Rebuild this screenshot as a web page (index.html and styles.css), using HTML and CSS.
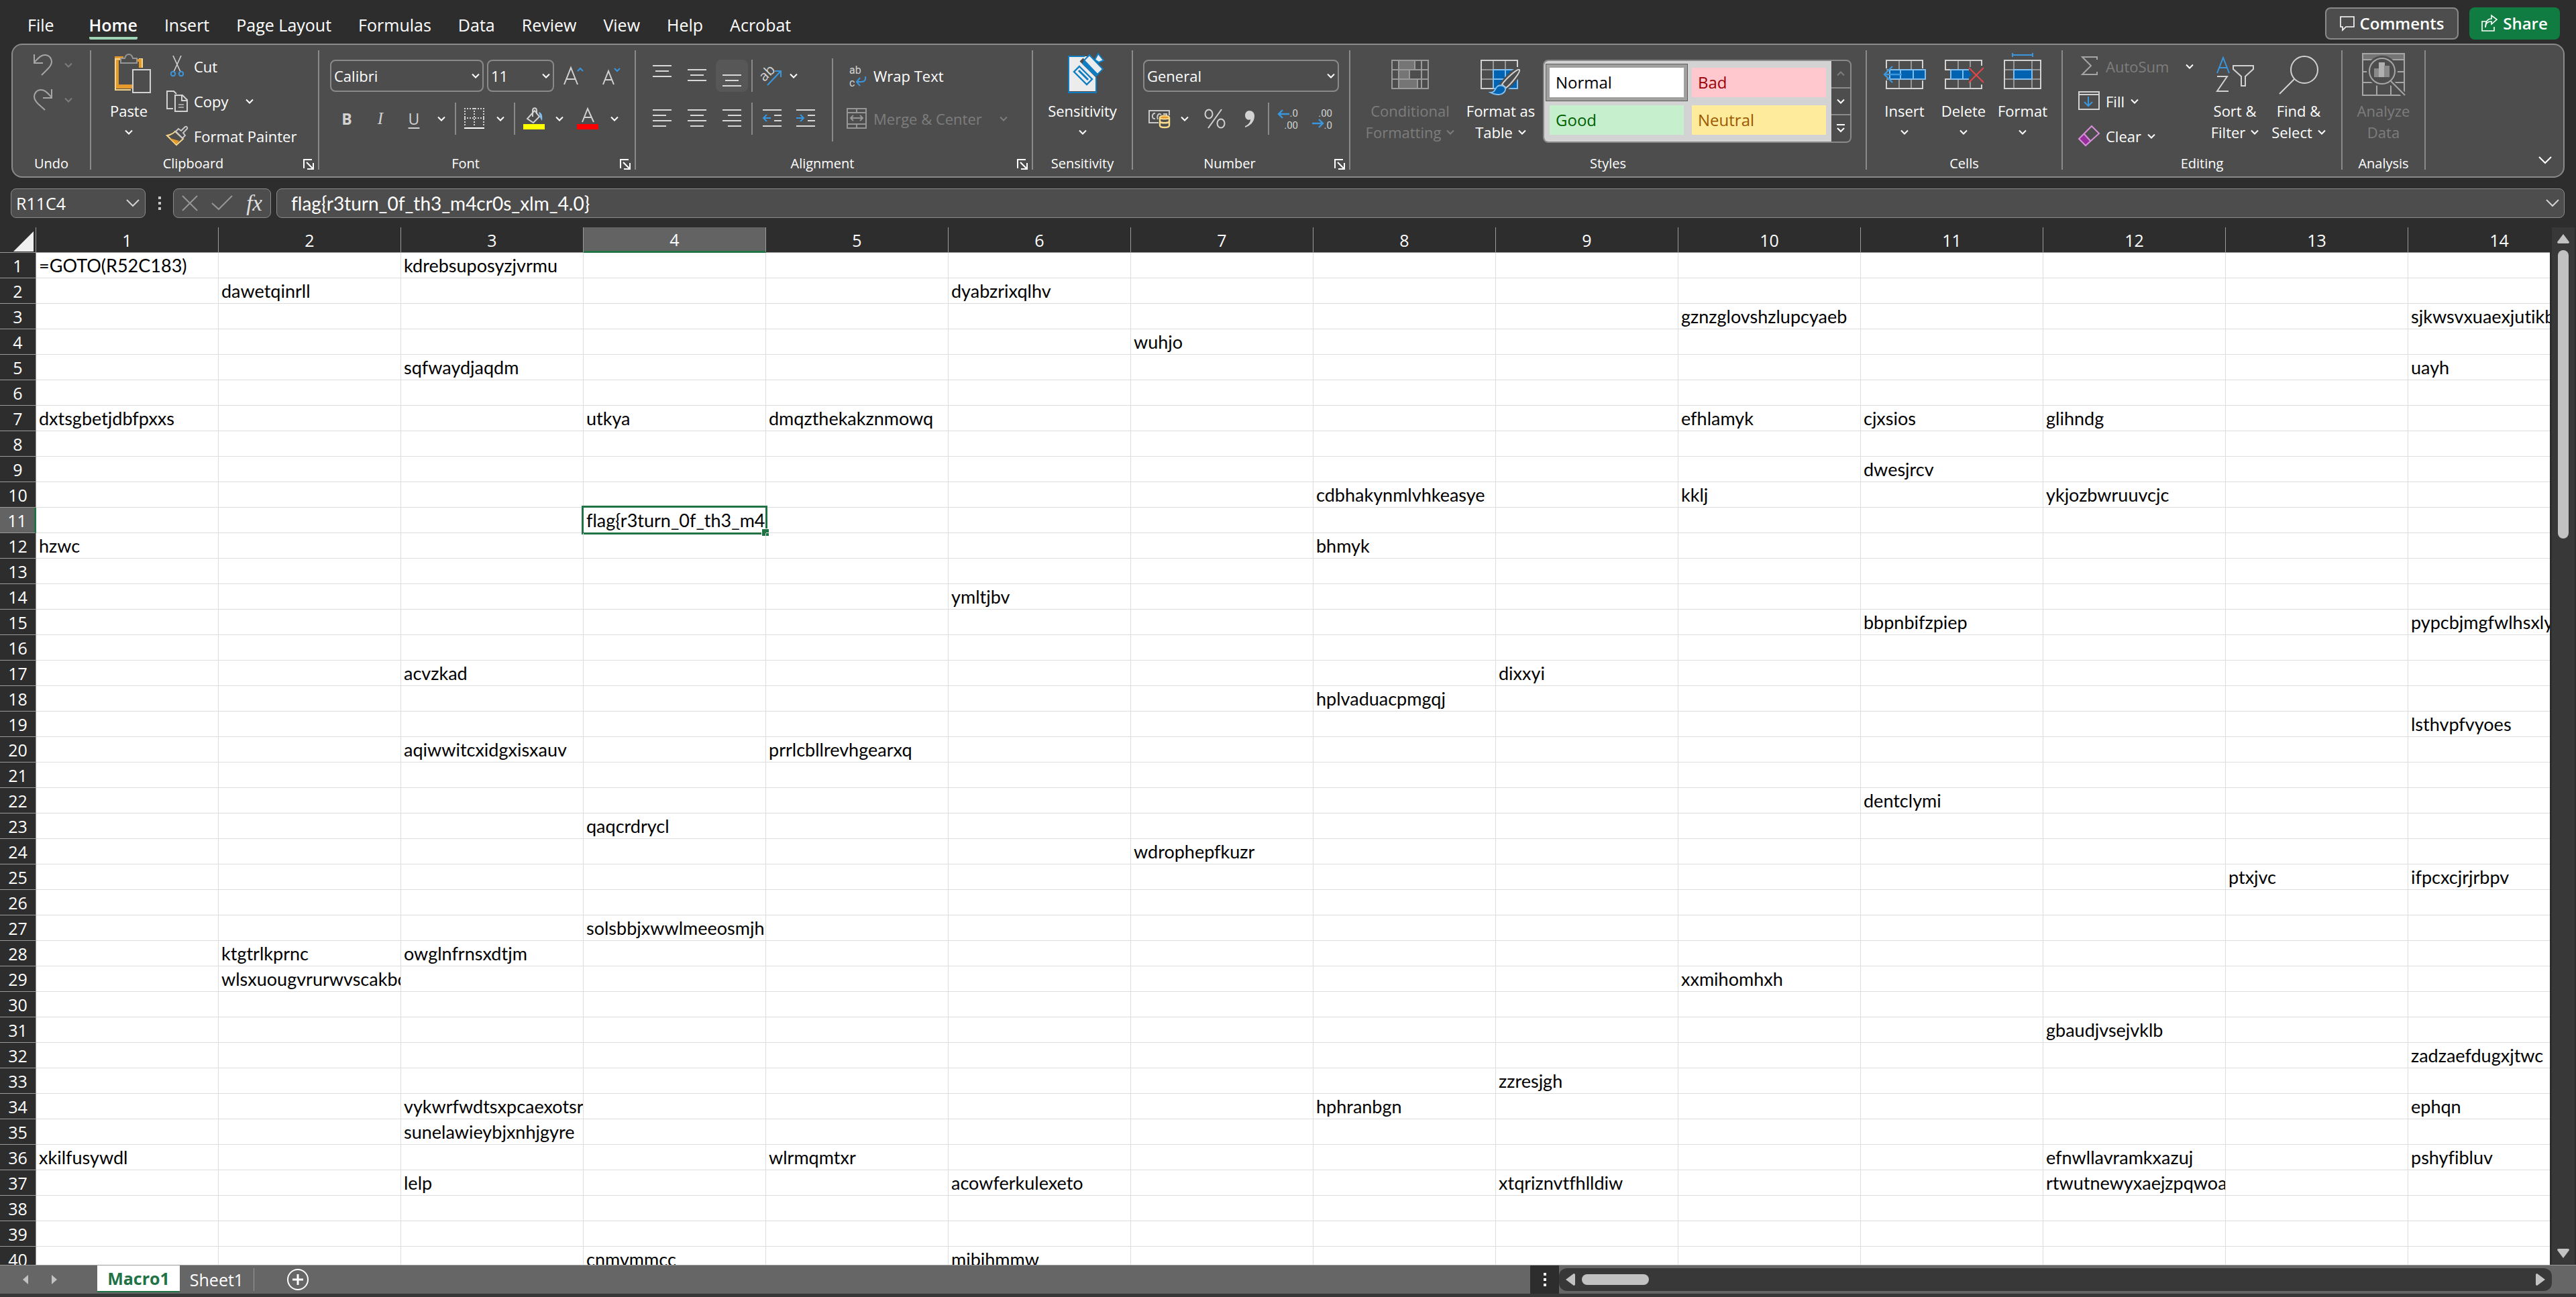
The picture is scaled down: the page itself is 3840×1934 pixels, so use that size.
FILE: index.html
```html
<!DOCTYPE html>
<html lang="en">
<head>
<meta charset="utf-8">
<title>Macro1 - Workbook</title>
<link rel="stylesheet" href="styles.css">
</head>
<body>
<svg class="defs" aria-hidden="true">
  <symbol id="chev" viewBox="0 0 12 8"><path d="M1 1.5l5 5 5-5" fill="none" stroke="currentColor" stroke-width="2"/></symbol>
  <symbol id="chev-lg" viewBox="0 0 20 12"><path d="M1 1l9 9 9-9" fill="none" stroke="currentColor" stroke-width="2"/></symbol>
  <symbol id="launch" viewBox="0 0 16 16"><path d="M1 14V1h12M5 5l9 9M15 6v9H6" fill="none" stroke="currentColor" stroke-width="2"/></symbol>
</svg>

<header class="topbar">
  <nav class="tabs">
    <a href="#">File</a><a href="#" class="current">Home</a><a href="#">Insert</a><a href="#">Page Layout</a><a href="#">Formulas</a><a href="#">Data</a><a href="#">Review</a><a href="#">View</a><a href="#">Help</a><a href="#">Acrobat</a>
  </nav>
  <div class="actions">
    <button class="comments"><svg width="22" height="24" viewBox="0 0 22 24"><path d="M1 2h20v15H9l-5 5v-5H1z" fill="none" stroke="#fff" stroke-width="1.6"/></svg>Comments</button>
    <button class="share"><svg width="24" height="24" viewBox="0 0 24 24"><path d="M8 9H1v14h18v-6M6 18c0-7 4-9 9-9V13l8-7-8-6v5C9 5 6 10 6 18z" fill="none" stroke="#fff" stroke-width="1.6"/></svg>Share</button>
  </div>
</header>

<section class="ribbon">
  <div class="group g-undo">
    <div class="body undo-list">
      <div class="pair"><button aria-label="Undo"><svg width="28" height="32" viewBox="0 0 28 32"><path d="M1 0v13h13M1 12C8 5 11 1 17 1c7 0 10 6 10 10 0 5-3 8-6 11l-9 9" fill="none" stroke="#a6a6a6" stroke-width="2"/></svg></button><svg class="c dim"><use href="#chev"/></svg></div>
      <div class="pair"><button aria-label="Redo"><svg width="28" height="32" viewBox="0 0 28 32"><path d="M27 0v13H14M27 12C20 5 17 1 11 1 4 1 1 7 1 11c0 5 3 8 6 11l10 9" fill="none" stroke="#a6a6a6" stroke-width="2"/></svg></button><svg class="c dim"><use href="#chev"/></svg></div>
    </div>
    <div class="foot">Undo</div>
  </div>

  <div class="group g-clip">
    <div class="body">
      <button class="big w112"><svg width="66" height="64" viewBox="0 0 66 64"><path d="M25 8H15v42h23" fill="none" stroke="#e69a2b" stroke-width="6"/><path d="M20 9h-7v46h23M48 9h5v13" fill="none" stroke="#f8d68b" stroke-width="2" /><path d="M46 11h4v11" fill="none" stroke="#e69a2b" stroke-width="4"/><path d="M21 15V8h6c1-4 3-6 6-6s5 2 6 6h6v7z" fill="#4d4d4d" stroke="#969696" stroke-width="2"/><rect x="39" y="25" width="26" height="34" fill="#4d4d4d" stroke="#d2d2d2" stroke-width="2"/></svg><span>Paste</span><svg class="c"><use href="#chev"/></svg></button>
      <div class="list">
        <button><svg width="32" height="32" viewBox="0 0 32 32"><path d="M10 0l11 24M22 0L11 24" fill="none" stroke="#d2d2d2" stroke-width="1.6"/><circle cx="10" cy="27" r="3.2" fill="none" stroke="#3a96dd" stroke-width="2"/><circle cx="22" cy="27" r="3.2" fill="none" stroke="#3a96dd" stroke-width="2"/></svg>Cut</button>
        <button><svg width="32" height="32" viewBox="0 0 32 32"><path d="M10 27H1V1h10l4 4M13 31V7h11l7 7v17zM23 7v8h8" fill="none" stroke="#d2d2d2" stroke-width="2"/><path d="M18 21h8M18 25h8" stroke="#a0a0a0" stroke-width="2"/></svg>Copy<svg class="c far"><use href="#chev"/></svg></button>
        <button><svg width="32" height="32" viewBox="0 0 32 32"><path d="M13 9C10 13 6 14 1 15l14 14 10-9z" fill="#4d4d4d" stroke="#f8d68b" stroke-width="2"/><path d="M5 19l14 4-4 5z" fill="#e69a2b"/><path d="M14 9l4-4 4 3 6-6c2-1 4 1 3 3l-6 6 3 4-4 4z" fill="#4d4d4d" stroke="#c8c8c8" stroke-width="2"/></svg>Format Painter</button>
      </div>
    </div>
    <div class="foot has-launch">Clipboard<svg class="launch"><use href="#launch"/></svg></div>
  </div>

  <div class="group g-font">
    <div class="body rows">
      <div class="row font-top">
        <label class="combo font-name"><select aria-label="Font"><option>Calibri</option></select><svg class="c"><use href="#chev"/></svg></label>
        <label class="combo font-size"><select aria-label="Font size"><option>11</option></select><svg class="c"><use href="#chev"/></svg></label>
        <button aria-label="Increase font size"><svg width="32" height="30" viewBox="0 0 32 30"><path d="M2 28L12 3l10 25M6 20h12" fill="none" stroke="#d2d2d2" stroke-width="2"/><path d="M22 8l4-4 4 4" fill="none" stroke="#3a96dd" stroke-width="2"/></svg></button>
        <button aria-label="Decrease font size"><svg width="32" height="30" viewBox="0 0 32 30"><path d="M3 28l8-20 8 20M6 21h10" fill="none" stroke="#d2d2d2" stroke-width="2"/><path d="M20 4l4 4 4-4" fill="none" stroke="#3a96dd" stroke-width="2"/></svg></button>
      </div>
      <div class="row font-bottom">
        <button class="glyph bold">B</button><button class="glyph italic">I</button><button class="glyph under">U</button><svg class="c"><use href="#chev"/></svg><i class="bar"></i>
        <button aria-label="Borders"><svg width="30" height="32" viewBox="0 0 30 32"><path d="M0 1h30M0 15h30M1 0v27M15 0v27M29 0v27" fill="none" stroke="#d2d2d2" stroke-width="2" stroke-dasharray="2 2"/><path d="M0 30h30" stroke="#fff" stroke-width="2"/></svg></button><svg class="c"><use href="#chev"/></svg><i class="bar"></i>
        <button aria-label="Fill color"><svg width="32" height="34" viewBox="0 0 32 34"><path d="M14 14V5c0-5 6-5 6 0v5M17 5L6 17l9 6 9-9z" fill="none" stroke="#d2d2d2" stroke-width="2"/><path d="M23 7c5 1 6 6 5 13-3-3-3-7-5-13z" fill="#83beec"/><path d="M0 25h32v8H0z" fill="#ff0"/></svg></button><svg class="c"><use href="#chev"/></svg>
        <button aria-label="Font color"><svg width="32" height="34" viewBox="0 0 32 34"><path d="M8 22L16 2l9 20M11 15h11" fill="none" stroke="#d2d2d2" stroke-width="2"/><path d="M0 25h32v8H0z" fill="#f00"/></svg></button><svg class="c"><use href="#chev"/></svg>
      </div>
    </div>
    <div class="foot has-launch">Font<svg class="launch"><use href="#launch"/></svg></div>
  </div>

  <div class="group g-align">
    <div class="body">
      <div class="rows">
        <div class="row al-top">
          <button aria-label="Top align"><svg width="28" height="32" viewBox="0 0 28 32"><path d="M0 1h28M4 9h20M0 17h28" stroke="#d8d8d8" stroke-width="2"/></svg></button>
          <button aria-label="Middle align"><svg width="28" height="32" viewBox="0 0 28 32"><path d="M0 7h28M4 15h20M0 23h28" stroke="#d8d8d8" stroke-width="2"/></svg></button>
          <button aria-label="Bottom align" class="on"><svg width="28" height="32" viewBox="0 0 28 32"><path d="M0 15h28M4 23h20M0 31h28" stroke="#d8d8d8" stroke-width="2"/></svg></button><i class="bar"></i>
          <button aria-label="Orientation"><svg width="34" height="34" viewBox="0 0 34 34"><text x="6" y="27" class="icon-ab" transform="rotate(-45 6 25)">ab</text><path d="M12 31L31 11M23 10h9v9" fill="none" stroke="#3a96dd" stroke-width="2"/></svg></button><svg class="c"><use href="#chev"/></svg>
        </div>
        <div class="row al-bottom">
          <button aria-label="Align left"><svg width="28" height="28" viewBox="0 0 28 28"><path d="M0 1h28M0 9h20M0 17h28M0 25h20" stroke="#d8d8d8" stroke-width="2"/></svg></button>
          <button aria-label="Center"><svg width="28" height="28" viewBox="0 0 28 28"><path d="M0 1h28M4 9h20M0 17h28M4 25h20" stroke="#d8d8d8" stroke-width="2"/></svg></button>
          <button aria-label="Align right"><svg width="28" height="28" viewBox="0 0 28 28"><path d="M0 1h28M8 9h20M0 17h28M8 25h20" stroke="#d8d8d8" stroke-width="2"/></svg></button><i class="bar"></i>
          <button aria-label="Decrease indent"><svg width="28" height="28" viewBox="0 0 28 28"><path d="M0 1h28M17 9h11M17 17h11M0 25h28" stroke="#d8d8d8" stroke-width="2"/><path d="M12 13H1M6 8l-5 5 5 5" fill="none" stroke="#3a96dd" stroke-width="2"/></svg></button>
          <button aria-label="Increase indent"><svg width="28" height="28" viewBox="0 0 28 28"><path d="M0 1h28M17 9h11M17 17h11M0 25h28" stroke="#d8d8d8" stroke-width="2"/><path d="M0 13h11M6 8l5 5-5 5" fill="none" stroke="#3a96dd" stroke-width="2"/></svg></button>
        </div>
      </div>
      <i class="bar tall"></i>
      <div class="rows wrap-col">
        <button class="line"><svg width="30" height="32" viewBox="0 0 30 32"><text x="4" y="13" class="icon-wr">ab</text><text x="4" y="32" class="icon-wr">c</text><path d="M28 17c1 5-1 8-6 8h-7M20 19l-5 6 5 6" fill="none" stroke="#3a96dd" stroke-width="2"/></svg>Wrap Text</button>
        <button class="line dim" disabled><svg width="30" height="32" viewBox="0 0 30 32"><path d="M1 1h28v29H1zM1 7h28M1 24h28M15 1v6M15 24v6M6 15h18M10 11l-4 4 4 4M20 11l4 4-4 4" fill="none" stroke="#969696" stroke-width="2"/></svg>Merge &amp; Center<svg class="c far"><use href="#chev"/></svg></button>
      </div>
    </div>
    <div class="foot has-launch">Alignment<svg class="launch"><use href="#launch"/></svg></div>
  </div>

  <div class="group g-sens">
    <div class="body">
      <button class="big fill"><svg width="64" height="64" viewBox="0 0 64 64"><path d="M11 5h31v10l9 20v22H11z" fill="#ececec"/><path d="M35 5H11v54h41V36" fill="none" stroke="#0f7dc2" stroke-width="2"/><path d="M30 10l24 24" stroke="#4d4d4d" stroke-width="7"/><path d="M27 20l19 19-8 8-19-19z" fill="#ececec" stroke="#0f7dc2" stroke-width="2.4"/><path d="M26 26l14 14" stroke="#0f7dc2" stroke-width="3"/><path d="M42 3l20 21-8 8L34 11z" fill="#ececec" stroke="#0f7dc2" stroke-width="2"/><path d="M34 11l21 21-3 4-21-20z" fill="#0f7dc2"/><path d="M50 10l5-9 8 10-7 3z" fill="#ececec" stroke="#0f7dc2" stroke-width="2"/></svg><span>Sensitivity</span><svg class="c"><use href="#chev"/></svg></button>
    </div>
    <div class="foot">Sensitivity</div>
  </div>

  <div class="group g-num">
    <div class="body rows">
      <div class="row num-top"><label class="combo num-format"><select aria-label="Number format"><option>General</option></select><svg class="c"><use href="#chev"/></svg></label></div>
      <div class="row num-bottom">
        <button aria-label="Accounting format"><svg width="32" height="28" viewBox="0 0 32 28"><path d="M15 20H1V2h30v7" fill="none" stroke="#c8c8c8" stroke-width="2"/><path d="M10 6c-5-1-6 9 0 8M19 8c-4-4-7 2-5 7M22 7h5v3" fill="none" stroke="#c8c8c8" stroke-width="2"/><path d="M17 12v12c0 4 14 4 14 0V12" fill="#4d4d4d" stroke="#fbdc8e" stroke-width="2.4"/><path d="M17 18c1 3 13 3 14 0" fill="none" stroke="#fbdc8e" stroke-width="2.4"/><ellipse cx="24" cy="12" rx="7" ry="2.6" fill="#e69a2b" stroke="#fbdc8e" stroke-width="2"/></svg></button><svg class="c"><use href="#chev"/></svg>
        <button aria-label="Percent"><svg width="32" height="30" viewBox="0 0 32 30"><ellipse cx="7" cy="8" rx="5.5" ry="6.5" fill="none" stroke="#d2d2d2" stroke-width="2"/><ellipse cx="25" cy="22" rx="5.5" ry="6.5" fill="none" stroke="#d2d2d2" stroke-width="2"/><path d="M26 1L6 29" stroke="#d2d2d2" stroke-width="2"/></svg></button>
        <button aria-label="Comma style"><svg width="16" height="28" viewBox="0 0 16 28"><path d="M7 2c5 0 8 3 8 8 0 9-7 15-14 17v-2c5-2 8-6 8-10-4 2-8-1-8-6 0-4 3-7 6-7z" fill="#d2d2d2"/></svg></button><i class="bar"></i>
        <button aria-label="Increase decimal"><svg width="32" height="34" viewBox="0 0 32 34"><text x="31" y="14" class="icon-num">.0</text><text x="31" y="32" class="icon-num">.00</text><path d="M18 10H2M8 4l-6 6 6 6" fill="none" stroke="#3a96dd" stroke-width="2.4"/></svg></button>
        <button aria-label="Decrease decimal"><svg width="32" height="34" viewBox="0 0 32 34"><text x="31" y="14" class="icon-num">.00</text><text x="31" y="32" class="icon-num">.0</text><path d="M1 24h16M11 18l6 6-6 6" fill="none" stroke="#3a96dd" stroke-width="2.4"/></svg></button>
      </div>
    </div>
    <div class="foot has-launch">Number<svg class="launch"><use href="#launch"/></svg></div>
  </div>

  <div class="group g-styles">
    <div class="body">
      <button class="big w150 dim" disabled><svg width="56" height="64" viewBox="0 0 56 64"><path d="M11 11h24v14H11zM11 25h16v14H11zM11 39h28v14H11z" fill="#757575"/><path d="M1 11h54v42H1zM1 25h54M1 39h54M11 11v42M45 11v42M35 11v14M27 25v14M39 39v14" fill="none" stroke="#9a9a9a" stroke-width="2"/></svg><span>Conditional</span><span>Formatting <svg class="c"><use href="#chev"/></svg></span></button>
      <button class="big w120"><svg width="60" height="64" viewBox="0 0 60 64"><path d="M19 25h36v28H19z" fill="#0063b1"/><path d="M19 11v42M37 11v14M1 25h18M1 39h18" fill="none" stroke="#969696" stroke-width="2"/><path d="M19 53V25h36v28zM37 25v28M19 39h36" fill="none" stroke="#83beec" stroke-width="2"/><path d="M19 53H1V11h54v10" fill="none" stroke="#d2d2d2" stroke-width="2"/><path d="M32 47C38 38 54 22 58 25S46 46 38 52z" fill="#4d4d4d" stroke="#4d4d4d" stroke-width="7"/><path d="M32 47C38 38 56 22 58 25S46 46 38 52z" fill="#4d4d4d" stroke="#d2d2d2" stroke-width="2"/><path d="M15 59c6 0 6-4 9-8 4-5 14-2 13 4-2 8-14 9-22 4z" fill="#0063b1" stroke="#83beec" stroke-width="2"/></svg><span>Format as</span><span>Table <svg class="c"><use href="#chev"/></svg></span></button>
      <div class="gallery">
        <div class="swatches"><button class="s-normal">Normal</button><button class="s-bad">Bad</button><button class="s-good">Good</button><button class="s-neutral">Neutral</button></div>
        <div class="steps"><button class="dim" aria-label="Previous styles"><svg class="c flip"><use href="#chev"/></svg></button><button aria-label="Next styles"><svg class="c"><use href="#chev"/></svg></button><button aria-label="More styles"><svg width="14" height="14" viewBox="0 0 14 14"><path d="M1 1h12M2 6l5 5 5-5" fill="none" stroke="#fff" stroke-width="2"/></svg></button></div>
      </div>
    </div>
    <div class="foot">Styles</div>
  </div>

  <div class="group g-cells">
    <div class="body">
      <button class="big w88"><svg width="64" height="64" viewBox="0 0 64 64"><path d="M24 11v42M42 11v42M5 25h54M5 39h54" stroke="#969696" stroke-width="2"/><path d="M5 23V11h54v12M5 41v12h54V41" fill="none" stroke="#d2d2d2" stroke-width="2"/><path d="M10 25h53v14H10z" fill="#0063b1" stroke="#83beec" stroke-width="2"/><path d="M26 25v14M45 25v14" stroke="#83beec" stroke-width="2"/><path d="M28 32H2M14 20L2 32l12 12" fill="none" stroke="#3a96dd" stroke-width="2.4"/></svg><span>Insert</span><svg class="c"><use href="#chev"/></svg></button>
      <button class="big w88"><svg width="64" height="64" viewBox="0 0 64 64"><path d="M24 11v14M42 11v10M24 39v14M42 41v12" stroke="#969696" stroke-width="2"/><path d="M12 25H5V11h54v8M12 39H5v14h54v-6" fill="none" stroke="#d2d2d2" stroke-width="2"/><path d="M13 25h25l6 7-6 7H13z" fill="#0063b1"/><path d="M40 25H13v14h27M31 25v14" fill="none" stroke="#83beec" stroke-width="2"/><path d="M40 22l22 22M62 22L40 44" stroke="#e0484d" stroke-width="2"/></svg><span>Delete</span><svg class="c"><use href="#chev"/></svg></button>
      <button class="big w88"><svg width="56" height="64" viewBox="0 0 56 64"><path d="M15 11v42M42 11v42M1 25h54M1 39h54" stroke="#969696" stroke-width="2"/><path d="M1 11h54v42H1z" fill="none" stroke="#d2d2d2" stroke-width="2"/><path d="M15 25h27v14H15z" fill="#0063b1" stroke="#83beec" stroke-width="2"/><path d="M13 3h30M13 0v6M43 0v6" stroke="#3a96dd" stroke-width="2"/></svg><span>Format</span><svg class="c"><use href="#chev"/></svg></button>
    </div>
    <div class="foot">Cells</div>
  </div>

  <div class="group g-edit">
    <div class="body">
      <div class="list edit-list">
        <button class="dim" disabled><svg width="32" height="32" viewBox="0 0 32 32"><path d="M28 6V2H6l13 13L6 28h22v-4" fill="none" stroke="#a6a6a6" stroke-width="2"/></svg>AutoSum<svg class="c far lit"><use href="#chev"/></svg></button>
        <button><svg width="32" height="32" viewBox="0 0 32 32"><path d="M1 2h30v26H1zM1 6h30" fill="none" stroke="#d2d2d2" stroke-width="2"/><path d="M15 9v14M9 17l6 6 6-6" fill="none" stroke="#3a96dd" stroke-width="2"/></svg>Fill <svg class="c"><use href="#chev"/></svg></button>
        <button><svg width="32" height="32" viewBox="0 0 32 32"><path d="M9 13l9 10-7 7-10-10z" fill="#962e9b"/><path d="M20 1l11 11-20 18L1 20zM9 13l9 10" fill="none" stroke="#d78fd9" stroke-width="2"/></svg>Clear <svg class="c"><use href="#chev"/></svg></button>
      </div>
      <button class="big w94"><svg width="56" height="64" viewBox="0 0 56 64"><path d="M1 30L10 7l9 23M4 22h12" fill="none" stroke="#3a96dd" stroke-width="2"/><path d="M1 35h15L1 57h17" fill="none" stroke="#d2d2d2" stroke-width="2"/><path d="M25 19h30v5L43 35v14h-6V35L25 24z" fill="none" stroke="#d2d2d2" stroke-width="2"/></svg><span>Sort &amp;</span><span>Filter <svg class="c"><use href="#chev"/></svg></span></button>
      <button class="big w94"><svg width="58" height="64" viewBox="0 0 58 64"><circle cx="37" cy="25" r="20" fill="none" stroke="#d2d2d2" stroke-width="2"/><path d="M22 39L0 61" stroke="#d2d2d2" stroke-width="2"/></svg><span>Find &amp;</span><span>Select <svg class="c"><use href="#chev"/></svg></span></button>
    </div>
    <div class="foot">Editing</div>
  </div>

  <div class="group g-ana">
    <div class="body">
      <button class="big fill dim" disabled><svg width="64" height="64" viewBox="0 0 64 64"><path d="M1 1h62v9H1z" fill="#757575"/><path d="M1 1h62v62H1zM1 10h62M1 28h8M52 28h11M1 44h62M22 48v15M43 48v15" fill="none" stroke="#a6a6a6" stroke-width="2"/><circle cx="30" cy="27" r="23" fill="#4d4d4d"/><path d="M44 44l20 20" stroke="#4d4d4d" stroke-width="8"/><circle cx="30" cy="27" r="19" fill="none" stroke="#a6a6a6" stroke-width="2"/><path d="M18 23h9v13h-9z" fill="#8a8a8a"/><path d="M25 14h9v22h-9z" fill="#b0b0b0"/><path d="M33 19h8v17h-8z" fill="#8a8a8a"/><path d="M43 42l21 21" stroke="#a6a6a6" stroke-width="2"/></svg><span>Analyze</span><span>Data</span></button>
    </div>
    <div class="foot">Analysis</div>
  </div>
  <button class="collapse" aria-label="Collapse ribbon"><svg width="20" height="12"><use href="#chev-lg"/></svg></button>
</section>

<section class="formula">
  <div class="namebox"><input aria-label="Name box" value="R11C4"><svg width="20" height="12"><use href="#chev-lg"/></svg></div>
  <div class="dots"><i></i><i></i><i></i></div>
  <div class="fxbox">
    <svg width="24" height="24" viewBox="0 0 24 24"><path d="M1 1l22 22M23 1L1 23" stroke="#969696" stroke-width="2"/></svg>
    <svg width="32" height="24" viewBox="0 0 32 24"><path d="M1 12l10 9L31 1" fill="none" stroke="#969696" stroke-width="2"/></svg>
    <span>fx</span>
  </div>
  <div class="entry"><input aria-label="Formula" value="flag{r3turn_0f_th3_m4cr0s_xlm_4.0}"><svg width="20" height="12"><use href="#chev-lg"/></svg></div>
</section>

<main class="sheet">
  <div class="viewport"><table id="grid"></table></div>
  <div class="vscroll"><svg width="18" height="14" viewBox="0 0 18 14"><path d="M9 0l9 12q0 2-2 2H2q-2 0-2-2z" fill="#c2c2c2"/></svg><i></i><svg width="18" height="14" viewBox="0 0 18 14"><path d="M9 14l9-12q0-2-2-2H2Q0 0 0 2z" fill="#c2c2c2"/></svg></div>
</main>

<footer class="sheetbar">
  <div class="nav"><svg width="8" height="14" viewBox="0 0 8 14"><path d="M8 0v14L0 7z" fill="#c2c2c2"/></svg><svg width="8" height="14" viewBox="0 0 8 14"><path d="M0 0v14l8-7z" fill="#c2c2c2"/></svg></div>
  <button class="sheet-tab active">Macro1</button>
  <button class="sheet-tab">Sheet1</button>
  <button class="add" aria-label="New sheet"><svg width="32" height="32" viewBox="0 0 32 32"><circle cx="16" cy="16" r="15" fill="none" stroke="#fff" stroke-width="2"/><path d="M16 8v16M8 16h16" stroke="#fff" stroke-width="3"/></svg></button>
  <div class="hzone">
    <div class="grip"><i></i><i></i><i></i></div>
    <div class="hscroll"><svg width="14" height="18" viewBox="0 0 14 18"><path d="M0 9L12 0q2 0 2 2v14q0 2-2 2z" fill="#c2c2c2"/></svg><i></i><svg width="14" height="18" viewBox="0 0 14 18"><path d="M14 9L2 0Q0 0 0 2v14q0 2 2 2z" fill="#c2c2c2"/></svg></div>
  </div>
</footer>
<script src="grid.js"></script>
</body>
</html>
```
FILE: styles.css
```css
* { box-sizing: border-box; }
body {
  margin: 0; height: 100vh; display: flex; flex-direction: column; overflow: hidden;
  background: #2d2d2d; color: #fff; font: 22px/32px "Open Sans", "Noto Sans", sans-serif;
}
button, input, select { font: inherit; color: inherit; background: none; border: 0; padding: 0; margin: 0; }
button { display: flex; align-items: center; justify-content: center; white-space: nowrap; }
svg { display: block; flex: none; overflow: visible; }
.defs { position: absolute; width: 0; height: 0; }
.c { width: 12px; height: 8px; }
.dim { color: #7d7d7d; }
.lit { color: #fff; }
.flip { transform: rotate(180deg); }

.topbar { flex: none; height: 65px; display: flex; justify-content: space-between; padding: 0 24px 0 41px; }
.tabs { display: flex; gap: 40px; font-size: 25px; line-height: 36px; padding-top: 19px; }
.tabs a { color: #fff; text-decoration: none; height: 40px; }
.tabs .current { font-weight: 600; border-bottom: 4px solid #9fd5b7; border-radius: 2px; margin-left: 12px; }
.actions { display: flex; gap: 16px; padding-top: 11px; }
.actions button { height: 48px; border-radius: 8px; font-weight: 600; font-size: 24px; gap: 8px; }
.comments { width: 199px; background: #4d4d4d; border: 2px solid #8a8a8a; }
.share { width: 135px; background: #107c41; }

.ribbon {
  flex: none; height: 200px; margin: 0 17px; padding: 8px 0 10px; display: flex; position: relative;
  background: #4d4d4d; border: 2px solid #8a8a8a; border-radius: 16px;
}
.group { flex: none; display: flex; flex-direction: column; border-right: 2px solid #8a8a8a; }
.body { flex: 1; display: flex; align-items: flex-start; }
.foot { position: relative; height: 18px; font-size: 20px; line-height: 18px; text-align: center; }
.has-launch { padding-right: 34px; }
.launch { position: absolute; right: 6px; top: 2px; width: 16px; height: 16px; }
.g-undo { width: 117px; }
.g-clip { width: 340px; }
.g-font { width: 472px; }
.g-align { width: 592px; }
.g-sens { width: 149px; }
.g-num { width: 324px; }
.g-styles { width: 770px; }
.g-cells { width: 292px; }
.g-edit { width: 417px; }
.g-ana { width: 124px; }
.undo-list { flex-direction: column; gap: 20px; padding: 6px 0 0 31px; }
.pair { display: flex; align-items: center; gap: 18px; }
.big { flex-direction: column; justify-content: flex-start; padding-top: 4px; }
.big > svg:first-child { margin-bottom: 6px; }
.big > span { display: flex; align-items: center; gap: 8px; }
.big > .c { margin-top: 12px; }
.fill { width: 100%; }
.w112 { width: 112px; }
.w150 { width: 150px; }
.w120 { width: 120px; }
.w88 { width: 88px; }
.w94 { width: 95px; }
.list { display: flex; flex-direction: column; gap: 4px; }
.list button { height: 48px; gap: 9px; justify-content: flex-start; }
.far { margin-left: 16px; }
.rows { display: flex; flex-direction: column; gap: 16px; padding-top: 14px; }
.row { display: grid; height: 48px; align-items: center; justify-items: center; }
.bar { width: 2px; height: 48px; background: #8a8a8a; }
.combo { display: flex; align-items: center; justify-content: space-between; height: 48px; padding: 0 4px; border: 2px solid #8a8a8a; border-radius: 8px; }
.combo select { appearance: none; flex: 1; min-width: 0; height: 44px; }
.g-font .body { padding-left: 16px; }
.font-top { grid-template-columns: 229px 100px 48px 56px; column-gap: 5px; }
.font-name, .font-size, .num-format { width: 100%; }
.font-bottom { grid-template-columns: 50px 50px 50px 32px 10px 46px 32px 10px 48px 28px 56px 24px; }
.glyph { color: #d2d2d2; font-size: 23px; }
.bold { font-weight: 700; }
.italic { font-family: "Liberation Serif", serif; font-style: italic; font-size: 25px; }
.under { text-decoration: underline; text-underline-offset: 4px; }
.g-align .body { padding-left: 13px; }
.al-top { grid-template-columns: 52px 52px 52px 8px 48px 20px; }
.al-bottom { grid-template-columns: 52px 52px 52px 8px 52px 48px; }
.on { width: 48px; height: 48px; background: #575757; border-radius: 8px; }
.tall { height: 124px; margin: 12px 20px 0 auto; }
.wrap-col { width: 276px; }
.line { height: 48px; gap: 10px; justify-content: flex-start; }
.icon-ab { fill: #d2d2d2; font: 21px "Open Sans", sans-serif; }
.icon-wr { fill: #d2d2d2; font: 16px Roboto, sans-serif; }
.icon-num { fill: #d2d2d2; font: 15px Roboto, sans-serif; text-anchor: end; }
.g-num .body { padding: 14px 15px 0; }
.num-top { width: 292px; grid-template-columns: 292px; }
.num-bottom { grid-template-columns: 48px 28px 62px 42px 14px 44px 58px; }
.g-styles .body { padding-left: 14px; }
.gallery { display: flex; width: 460px; height: 124px; margin: 14px 0 0 3px; border: 2px solid #8a8a8a; border-radius: 8px; overflow: hidden; }
.swatches { flex: 1; display: grid; grid-template-columns: 200px 200px; grid-auto-rows: 44px; gap: 12px; padding: 10px 8px; background: #d3d3d3; }
.swatches button { justify-content: flex-start; padding-left: 9px; font-size: 24px; }
.s-normal { background: #fff; color: #000; box-shadow: 0 0 0 5px #a0a09f, 0 0 0 6px #5c5c5c; }
.s-bad { background: #ffc7ce; color: #9c0006; }
.s-good { background: #c6efce; color: #006100; }
.s-neutral { background: #ffeb9c; color: #9c5700; }
.steps { width: 28px; display: grid; grid-template-rows: 1fr 1fr 1fr; gap: 2px; background: #8a8a8a; }
.steps button { background: #4d4d4d; }
.g-cells .body { padding-left: 12px; }
.edit-list { width: 186px; }
.g-edit .body { padding-left: 23px; }
.collapse { margin: auto 17px 8px auto; }

.formula { flex: none; height: 44px; margin: 16px 17px 14px 16px; display: flex; }
.formula > div:not(.dots) { display: flex; align-items: center; background: #4d4d4d; border: 1px solid #8a8a8a; border-radius: 8px; }
.formula svg { color: #d2d2d2; }
.formula .namebox { width: 201px; padding: 0 8px 0 7px; }
.namebox input { flex: 1; min-width: 0; font-size: 25px; }
.dots { width: 41px; display: flex; flex-direction: column; align-items: center; justify-content: center; gap: 4px; }
.dots i, .grip i { width: 4px; height: 4px; background: #c8c8c8; }
.formula .fxbox { width: 146px; margin-right: 8px; padding: 0 12px; justify-content: space-between; }
.fxbox span { font: italic 33px/36px "Liberation Serif", serif; color: #e0e0e0; }
.formula .entry { flex: 1; padding: 0 7px 0 21px; }
.entry input { flex: 1; min-width: 0; font-family: Lato, sans-serif; font-size: 28px; font-variant-ligatures: none; }

.sheet { flex: 1; min-height: 0; display: flex; }
.viewport { flex: 1; min-width: 0; overflow: hidden; background: #fff; }
#grid { table-layout: fixed; width: 3862px; border-collapse: separate; border-spacing: 0; color: #000; font: 27px/36px Lato, sans-serif; font-variant-ligatures: none; }
#grid col:first-child { width: 54px; }
#grid th { height: 38px; padding: 0; background: #2d2d2d; color: #fff; font: 25px/36px "Open Sans", sans-serif; border: 0 solid #9a9a9a; border-width: 0 1px 1px 0; }
#grid tbody th { line-height: 35px; padding-top: 2px; }
#grid .corner { background: linear-gradient(#2d2d2d, #2d2d2d); }
.corner svg { margin: 4px 3px 0 auto; }
#grid th.sel { background: #636363; }
#grid thead th.sel { border-bottom: 3px solid #217346; line-height: 34px; }
#grid tbody th.sel { border-right: 3px solid #217346; }
#grid td { position: relative; height: 38px; padding: 0 0 0 4px; border: 0 solid #dedede; border-width: 0 1px 1px 0; }
#grid td span { display: block; height: 37px; line-height: 38px; overflow: hidden; white-space: nowrap; }
#grid td.active::before { content: ""; position: absolute; inset: -3px -3px -3px -3px; border: 3px solid #217346; }
#grid td.active::after { content: ""; position: absolute; right: -5px; bottom: -5px; width: 10px; height: 10px; background: #217346; border: solid #fff; border-width: 1px 0 0 1px; }
.vscroll { width: 39px; padding: 0 2px 0 3px; display: flex; flex-direction: column; align-items: center; background: linear-gradient(#383838, #383838) content-box; }
.vscroll svg { margin: 10px 0; }
.vscroll i { width: 16px; height: 430px; border-radius: 8px; background: #c2c2c2; margin-bottom: auto; }

.sheetbar { flex: none; height: 48px; display: flex; background: #666; border-top: 1px solid #9a9a9a; border-bottom: 5px solid #383838; font-size: 25px; }
.nav { width: 145px; display: flex; align-items: center; gap: 35px; padding-left: 34px; }
.sheet-tab { height: 34px; margin-top: 4px; width: 111px; border-right: 1px solid #9a9a9a; }
.sheet-tab.active { width: 123px; height: 40px; margin: 0; background: #fff; color: #217346; font-weight: 700; border: 0; border-bottom: 2px solid #217346; }
.add { width: 130px; }
.hzone { width: 1523px; margin: 0 36px 0 auto; display: flex; }
.grip { width: 43px; background: #2d2d2d; display: flex; flex-direction: column; align-items: center; justify-content: center; gap: 4px; }
.grip i { background: #fff; }
.hscroll { flex: 1; height: 34px; margin-top: 4px; padding: 0 10px; display: flex; align-items: center; background: #383838; border-radius: 12px; }
.hscroll i { width: 100px; height: 16px; border-radius: 8px; background: #c2c2c2; margin: 0 auto 0 10px; }
```
FILE: grid.js
```js
const COLS = 14, ROWS = 40, ACTIVE = { row: 11, col: 4 };
const cells = {
  1: { 1: "=GOTO(R52C183)", 3: "kdrebsuposyzjvrmu" },
  2: { 2: "dawetqinrll", 6: "dyabzrixqlhv" },
  3: { 10: "gznzglovshzlupcyaeb", 14: "sjkwsvxuaexjutikb" },
  4: { 7: "wuhjo" },
  5: { 3: "sqfwaydjaqdm", 14: "uayh" },
  7: { 1: "dxtsgbetjdbfpxxs", 4: "utkya", 5: "dmqzthekakznmowq", 10: "efhlamyk", 11: "cjxsios", 12: "glihndg" },
  9: { 11: "dwesjrcv" },
  10: { 8: "cdbhakynmlvhkeasye", 10: "kklj", 12: "ykjozbwruuvcjc" },
  11: { 4: "flag{r3turn_0f_th3_m4cr0s_xlm_4.0}" },
  12: { 1: "hzwc", 8: "bhmyk" },
  14: { 6: "ymltjbv" },
  15: { 11: "bbpnbifzpiep", 14: "pypcbjmgfwlhsxly" },
  17: { 3: "acvzkad", 9: "dixxyi" },
  18: { 8: "hplvaduacpmgqj" },
  19: { 14: "lsthvpfvyoes" },
  20: { 3: "aqiwwitcxidgxisxauv", 5: "prrlcbllrevhgearxq" },
  22: { 11: "dentclymi" },
  23: { 4: "qaqcrdrycl" },
  24: { 7: "wdrophepfkuzr" },
  25: { 13: "ptxjvc", 14: "ifpcxcjrjrbpv" },
  27: { 4: "solsbbjxwwlmeeosmjh" },
  28: { 2: "ktgtrlkprnc", 3: "owglnfrnsxdtjm" },
  29: { 2: "wlsxuougvrurwvscakbc", 10: "xxmihomhxh" },
  31: { 12: "gbaudjvsejvklb" },
  32: { 14: "zadzaefdugxjtwc" },
  33: { 9: "zzresjgh" },
  34: { 3: "vykwrfwdtsxpcaexotsr", 8: "hphranbgn", 14: "ephqn" },
  35: { 3: "sunelawieybjxnhjgyre" },
  36: { 1: "xkilfusywdl", 5: "wlrmqmtxr", 12: "efnwllavramkxazuj", 14: "pshyfibluv" },
  37: { 3: "lelp", 6: "acowferkulexeto", 9: "xtqriznvtfhlldiw", 12: "rtwutnewyxaejzpqwoa" },
  40: { 4: "cnmvmmcc", 6: "mjbjhmmw" }
};
let html = "<colgroup><col>" + "<col>".repeat(COLS) + "</colgroup><thead><tr><th class=\"corner\">" +
  '<svg width="30" height="30" viewBox="0 0 30 30"><path d="M30 0v30H0z" fill="#f0f0f0"/></svg></th>';
for (let c = 1; c <= COLS; c++) html += `<th${c === ACTIVE.col ? ' class="sel"' : ""}>${c}</th>`;
html += "</tr></thead><tbody>";
for (let r = 1; r <= ROWS; r++) {
  html += `<tr><th${r === ACTIVE.row ? ' class="sel"' : ""}>${r}</th>`;
  for (let c = 1; c <= COLS; c++) {
    const text = (cells[r] || {})[c];
    const active = r === ACTIVE.row && c === ACTIVE.col;
    html += `<td${active ? ' class="active"' : ""}>${text ? `<span>${text}</span>` : ""}</td>`;
  }
  html += "</tr>";
}
document.getElementById("grid").innerHTML = html + "</tbody>";
```
